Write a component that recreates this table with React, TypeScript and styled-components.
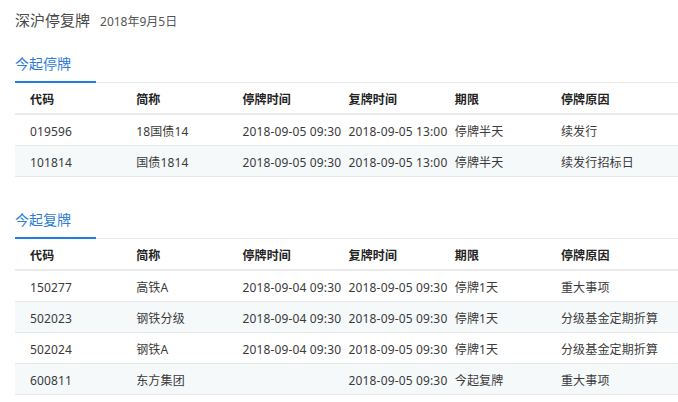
import React from "react";
import styled, { createGlobalStyle } from "styled-components";

const GlobalStyle = createGlobalStyle`
  html, body {
    margin: 0;
    padding: 0;
    background: #ffffff;
  }
  body {
    font-family: "Noto Sans", "Noto Sans CJK SC", sans-serif;
    color: #333333;
  }
`;

const Page = styled.div`
  padding: 10px 0 0 15px;
  width: 663px;
  overflow: hidden;
`;

const TitleBar = styled.div`
  display: flex;
  align-items: baseline;
  gap: 10px;
  height: 20px;
  line-height: 20px;
`;

const Title = styled.span`
  font-size: 15px;
  color: #4a4a4a;
`;

const DateText = styled.span`
  font-size: 12px;
  color: #555555;
`;

const Section = styled.section<{ $first?: boolean }>`
  margin-top: ${(p) => (p.$first ? "22px" : "31px")};
`;

const TabBar = styled.div`
  display: flex;
  border-bottom: 1px solid #e6e6e6;
`;

const Tab = styled.div`
  width: 81px;
  font-size: 14px;
  line-height: 20px;
  padding-top: 2px;
  padding-bottom: 7px;
  color: #2a7bd6;
  border-bottom: 2px solid #1f7fe0;
  margin-bottom: -1px;
`;

const Row = styled.div<{ $head?: boolean; $shade?: boolean }>`
  display: grid;
  grid-template-columns: repeat(6, 106.2px);
  height: 30px;
  align-items: start;
  font-size: 12px;
  background: ${(p) => (p.$shade ? "#f6f9fa" : "#ffffff")};
  border-bottom: ${(p) => (p.$head ? "2px solid #ebebeb" : "1px solid #e8e8e8")};
  color: ${(p) => (p.$head ? "#222222" : "#3a3a3a")};
  font-weight: ${(p) => (p.$head ? 700 : 400)};
`;

const Cell = styled.div`
  padding-left: 15px;
  padding-top: 4px;
  height: 26px;
  white-space: nowrap;
  line-height: 26px;
  letter-spacing: 0.15px;
`;

type Item = [string, string, string, string, string, string];

const headers: Item = ["代码", "简称", "停牌时间", "复牌时间", "期限", "停牌原因"];

const suspended: Item[] = [
  ["019596", "18国债14", "2018-09-05 09:30", "2018-09-05 13:00", "停牌半天", "续发行"],
  ["101814", "国债1814", "2018-09-05 09:30", "2018-09-05 13:00", "停牌半天", "续发行招标日"],
];

const resumed: Item[] = [
  ["150277", "高铁A", "2018-09-04 09:30", "2018-09-05 09:30", "停牌1天", "重大事项"],
  ["502023", "钢铁分级", "2018-09-04 09:30", "2018-09-05 09:30", "停牌1天", "分级基金定期折算"],
  ["502024", "钢铁A", "2018-09-04 09:30", "2018-09-05 09:30", "停牌1天", "分级基金定期折算"],
  ["600811", "东方集团", "", "2018-09-05 09:30", "今起复牌", "重大事项"],
];

const Table: React.FC<{ rows: Item[] }> = ({ rows }) => (
  <div>
    <Row $head>
      {headers.map((h) => (
        <Cell key={h}>{h}</Cell>
      ))}
    </Row>
    {rows.map((r, i) => (
      <Row key={r[0]} $shade={i % 2 === 1}>
        {r.map((c, j) => (
          <Cell key={j}>{c}</Cell>
        ))}
      </Row>
    ))}
  </div>
);

export default function App() {
  return (
    <>
      <GlobalStyle />
      <Page>
        <TitleBar>
          <Title>深沪停复牌</Title>
          <DateText>2018年9月5日</DateText>
        </TitleBar>
        <Section $first>
          <TabBar>
            <Tab>今起停牌</Tab>
          </TabBar>
          <Table rows={suspended} />
        </Section>
        <Section>
          <TabBar>
            <Tab>今起复牌</Tab>
          </TabBar>
          <Table rows={resumed} />
        </Section>
      </Page>
    </>
  );
}
